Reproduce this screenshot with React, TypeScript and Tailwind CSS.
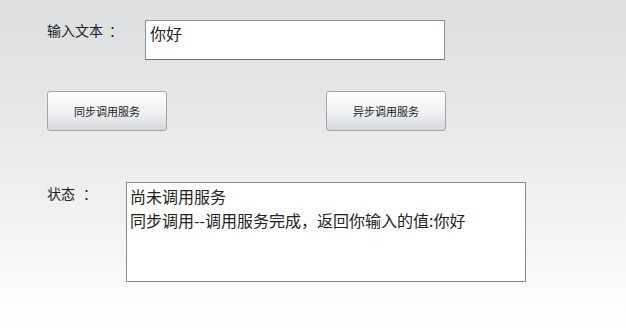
export default function App() {
  const font = { fontFamily: '"Noto Sans CJK SC", "Noto Sans", sans-serif' };
  return (
    <div
      className="w-[626px] h-[330px] bg-gradient-to-b from-[#dcdedf] via-[#ebecec] to-white pl-[47px] pt-[20px] text-[#222]"
      style={font}
    >
      {/* Input row */}
      <div className="flex">
        <div className="w-[98px] text-[14px] leading-[20px]">
          输入文本<span className="pl-[6px]">：</span>
        </div>
        <input
          readOnly
          value="你好"
          className="w-[300px] h-[40px] bg-white border border-[#8a949b] border-b-[#6d767c] pl-[4px] pb-[14px] text-[16px] leading-[22px] outline-none"
          style={font}
        />
      </div>

      {/* Buttons */}
      <div className="flex gap-[159px] mt-[31px]">
        <button className="w-[120px] h-[40px] rounded-[3px] border border-[#a3a7ab] bg-gradient-to-b from-white via-[#f1f2f3] to-[#d5d9dc] text-[11px] text-[#222]">
          同步调用服务
        </button>
        <button className="w-[120px] h-[40px] rounded-[3px] border border-[#a3a7ab] bg-gradient-to-b from-white via-[#f1f2f3] to-[#d5d9dc] text-[11px] text-[#222]">
          异步调用服务
        </button>
      </div>

      {/* Status */}
      <div className="flex mt-[51px]">
        <div className="w-[79px] pt-[1px] text-[14px] leading-[20px]">
          状态<span className="pl-[8px]">：</span>
        </div>
        <textarea
          readOnly
          value={"尚未调用服务\n同步调用--调用服务完成，返回你输入的值:你好"}
          className="w-[400px] h-[100px] bg-white border border-[#868c91] pl-[3px] pt-[1px] text-[16px] leading-[24px] resize-none outline-none"
          style={font}
        />
      </div>
    </div>
  );
}
